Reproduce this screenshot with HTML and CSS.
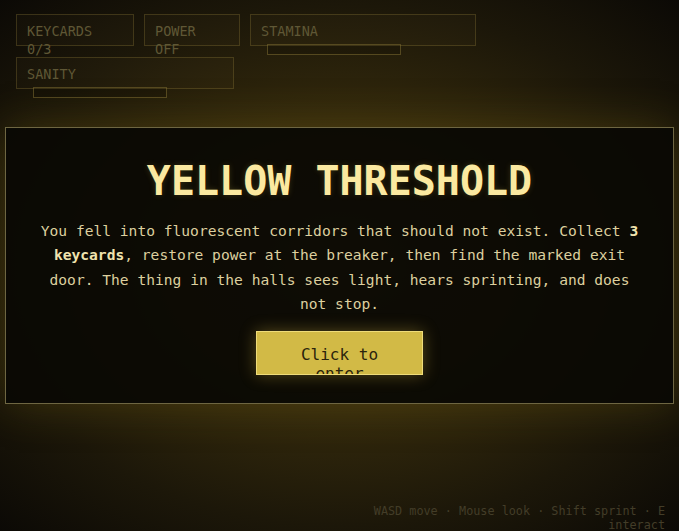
FILE: index.html
```html
<!DOCTYPE html>
<html>
<head>
<meta charset="utf-8">
<link rel="stylesheet" href="styles.css">
</head>
<body>
<div class="hud">
  <div class="stat stat-keys"><div class="label">KEYCARDS</div><div class="value">0/3</div></div>
  <div class="stat stat-power"><div class="label">POWER</div><div class="value">OFF</div></div>
  <div class="stat stat-stamina"><div class="label">STAMINA</div><div class="bar"></div></div>
  <div class="stat stat-sanity"><div class="label">SANITY</div><div class="bar"></div></div>
</div>
<div class="stage">
  <div class="panel">
    <h1 class="title">YELLOW THRESHOLD</h1>
    <p class="intro">You fell into fluorescent corridors that should not exist. Collect <strong>3 keycards</strong>, restore power at the breaker, then find the marked exit door. The thing in the halls sees light, hears sprinting, and does not stop.</p>
    <button class="enter">Click to enter</button>
  </div>
</div>
<div class="hint">WASD move · Mouse look · Shift sprint · E interact</div>
</body>
</html>
```
FILE: styles.css
```css
html, body {
  margin: 0;
  height: 100%;
}
body {
  position: relative;
  overflow: hidden;
  font-family: "DejaVu Sans Mono", monospace;
  background: radial-gradient(ellipse 75% 70% at 50% 50%, #4a3c10 0%, #33290c 40%, #1c1709 70%, #0a0805 100%);
  color: #e8dca8;
}
.hud {
  position: absolute;
  top: 14px;
  left: 16px;
  width: 470px;
  display: flex;
  flex-wrap: wrap;
  gap: 11px 10px;
}
.stat {
  box-sizing: border-box;
  height: 32px;
  padding: 7px 10px 0;
  border: 1px solid rgba(150, 130, 60, 0.3);
  background: rgba(255, 230, 120, 0.025);
  font-size: 13.5px;
  line-height: 18px;
  color: #5f5735;
}
.stat-keys { width: 118px; }
.stat-power { width: 96px; }
.stat-stamina { width: 226px; }
.stat-sanity { width: 218px; }
.bar {
  box-sizing: border-box;
  width: 134px;
  height: 11px;
  margin: 4px 0 0 6px;
  border: 1px solid rgba(150, 130, 60, 0.45);
  background: rgba(0, 0, 0, 0.15);
}
.stage {
  height: 100%;
  display: flex;
  align-items: center;
  justify-content: center;
}
.panel {
  box-sizing: border-box;
  width: 669px;
  padding: 29px 30px 28px;
  border: 1px solid #6e6642;
  background: rgba(10, 9, 4, 0.93);
  box-shadow: 0 0 40px rgba(120, 100, 20, 0.35);
  text-align: center;
}
.title {
  margin: 0 0 14px;
  font-size: 40px;
  line-height: 48px;
  font-weight: bold;
  color: #fbe9a0;
  text-shadow: 0 0 6px rgba(240, 210, 90, 0.18);
}
.intro {
  margin: 0 auto 15px;
  max-width: 606px;
  font-size: 14.6px;
  line-height: 24.3px;
  color: #ddd09f;
}
.intro strong {
  color: #f0e3ae;
}
.enter {
  box-sizing: border-box;
  display: inline-block;
  width: 167px;
  height: 44px;
  overflow: hidden;
  padding: 13px 40px 0;
  border: 1px solid #efdc7a;
  background: #d2ba46;
  color: #2a230c;
  font-family: "DejaVu Sans Mono", monospace;
  font-size: 16px;
  line-height: 19px;
  box-shadow: 0 0 16px rgba(220, 190, 70, 0.35);
  vertical-align: top;
}
.hint {
  position: absolute;
  right: 14px;
  bottom: -1px;
  width: 300px;
  text-align: right;
  font-size: 11.8px;
  line-height: 14px;
  color: #433d28;
}
```
